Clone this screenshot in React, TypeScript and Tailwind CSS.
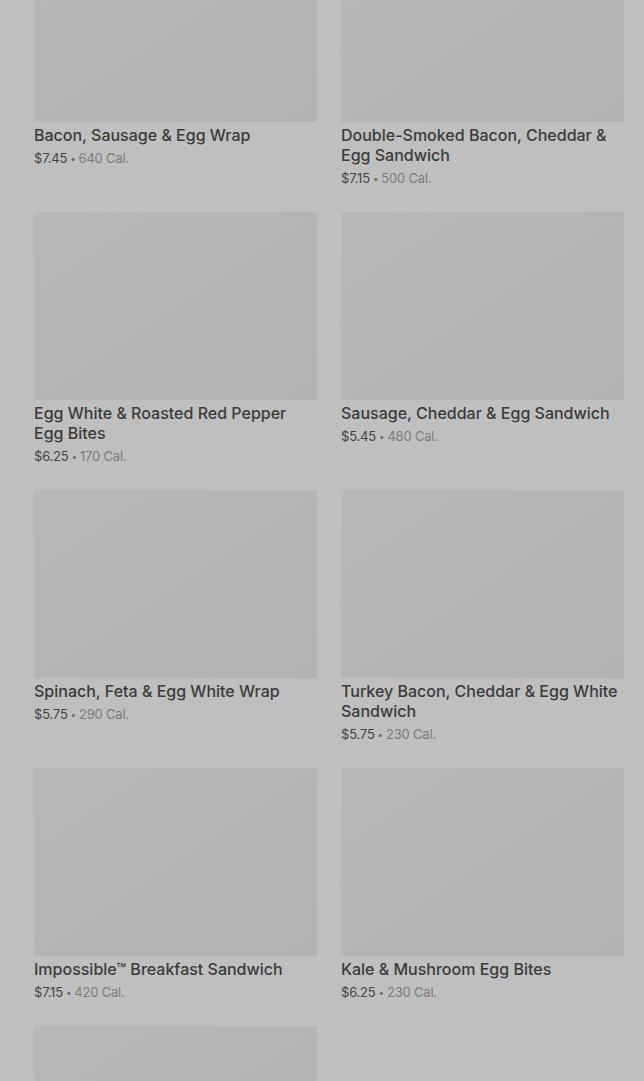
import React from "react";

const items = [
  { name: "Bacon, Sausage & Egg Wrap", price: "$7.45", cal: "640 Cal." },
  { name: "Double-Smoked Bacon, Cheddar & Egg Sandwich", price: "$7.15", cal: "500 Cal." },
  { name: "Egg White & Roasted Red Pepper Egg Bites", price: "$6.25", cal: "170 Cal." },
  { name: "Sausage, Cheddar & Egg Sandwich", price: "$5.45", cal: "480 Cal." },
  { name: "Spinach, Feta & Egg White Wrap", price: "$5.75", cal: "290 Cal." },
  { name: "Turkey Bacon, Cheddar & Egg White Sandwich", price: "$5.75", cal: "230 Cal." },
  { name: "Impossible™ Breakfast Sandwich", price: "$7.15", cal: "420 Cal." },
  { name: "Kale & Mushroom Egg Bites", price: "$6.25", cal: "230 Cal." },
  { name: "", price: "", cal: "" },
];

export default function App() {
  return (
    <div
      className="w-[644px] h-[1081px] overflow-hidden bg-[#bfbfbf]"
      style={{ fontFamily: "Inter, 'Noto Sans', sans-serif" }}
    >
      <div className="mt-[-66px] pl-[34px] pr-[20px] grid grid-cols-2 gap-x-[24px] gap-y-[24px] items-start">
        {items.map((it, i) => (
          <div key={i} className="flex flex-col">
            <div className="h-[188px] w-full bg-gradient-to-br from-[#b9b9b9] to-[#b2b2b2]" />
            {it.name && (
              <>
                <div className="mt-[3px] text-[16px] leading-[20px] font-medium text-[#3b3b3b] tracking-[0px]">
                  {it.name}
                </div>
                <div className="mt-[3px] h-[20px] text-[13px] leading-[20px] text-[#444] tracking-[-0.2px]">
                  {it.price}
                  <span className="text-[#6f6f6f] text-[10px] leading-[20px] mx-[3px] relative -top-[1px]">•</span>
                  <span className="text-[#7c7c7c]">{it.cal}</span>
                </div>
              </>
            )}
          </div>
        ))}
      </div>
    </div>
  );
}
